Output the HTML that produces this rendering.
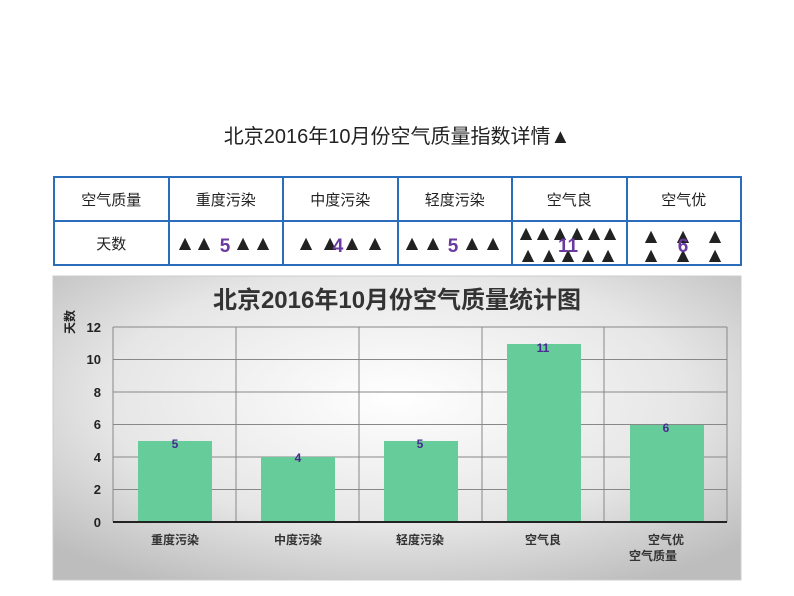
<!DOCTYPE html>
<html><head><meta charset="utf-8"><style>
body{margin:0;width:794px;height:596px;background:#fff;position:relative;overflow:hidden;font-family:"Liberation Sans","Noto Sans CJK SC",sans-serif;}
.t{position:absolute;left:0;width:794px;top:120px;text-align:center;font-size:20px;color:#222;}
table{position:absolute;left:53px;top:176px;border-collapse:collapse;table-layout:fixed;width:689px;}
td{border:2px solid #2a6ebb;text-align:center;font-size:15px;color:#222;padding:0;}
tr.a td{height:42px}tr.b td{height:42px}
</style></head><body>
<div class="t">北京2016年10月份空气质量指数详情▲</div>
<table>
<tr class="a"><td>空气质量</td><td>重度污染</td><td>中度污染</td><td>轻度污染</td><td>空气良</td><td>空气优</td></tr>
<tr class="b"><td>天数</td><td></td><td></td><td></td><td></td><td></td></tr>
</table>
<svg width="794" height="596" style="position:absolute;left:0;top:0">
<g fill="#222" font-size="16" font-family="DejaVu Sans,sans-serif" text-anchor="middle">
<text x="185" y="248">▲</text><text x="204" y="248">▲</text><text x="243" y="248">▲</text><text x="263" y="248">▲</text>
<text x="306" y="248">▲</text><text x="330" y="248">▲</text><text x="352" y="248">▲</text><text x="375" y="248">▲</text>
<text x="412" y="248">▲</text><text x="433" y="248">▲</text><text x="472" y="248">▲</text><text x="493" y="248">▲</text>
<text x="526" y="238">▲</text><text x="543" y="238">▲</text><text x="560" y="238">▲</text><text x="577" y="238">▲</text><text x="594" y="238">▲</text><text x="610" y="238">▲</text>
<text x="528" y="260">▲</text><text x="549" y="260">▲</text><text x="568" y="260">▲</text><text x="588" y="260">▲</text><text x="608" y="260">▲</text>
<text x="651" y="241">▲</text><text x="683" y="241">▲</text><text x="715" y="241">▲</text>
<text x="651" y="260">▲</text><text x="683" y="260">▲</text><text x="715" y="260">▲</text>
</g>
<g fill="#6a3aa0" font-size="19" font-weight="bold" font-family="Liberation Sans,sans-serif" text-anchor="middle">
<text x="225" y="252">5</text><text x="338" y="252">4</text><text x="453" y="252">5</text><text x="568" y="252">11</text><text x="683" y="252">6</text>
</g>
<defs><radialGradient id="bg" cx="50%" cy="40%" r="70%"><stop offset="0" stop-color="#ffffff"/><stop offset="0.6" stop-color="#e6e6e6"/><stop offset="1" stop-color="#bdbdbd"/></radialGradient></defs>
<rect x="53" y="276" width="688" height="304" fill="url(#bg)" stroke="#ccc"/>
<text x="397" y="308" text-anchor="middle" font-size="24" font-weight="bold" fill="#333" font-family="Liberation Sans,Noto Sans CJK SC,sans-serif">北京2016年10月份空气质量统计图</text>
<g stroke="#888" stroke-width="1">
<line x1="113" y1="327" x2="727" y2="327"/><line x1="113" y1="359.5" x2="727" y2="359.5"/><line x1="113" y1="392" x2="727" y2="392"/><line x1="113" y1="424.5" x2="727" y2="424.5"/><line x1="113" y1="457" x2="727" y2="457"/><line x1="113" y1="489.5" x2="727" y2="489.5"/>
<line x1="236" y1="327" x2="236" y2="522"/><line x1="359" y1="327" x2="359" y2="522"/><line x1="482" y1="327" x2="482" y2="522"/><line x1="604" y1="327" x2="604" y2="522"/><line x1="727" y1="327" x2="727" y2="522"/><line x1="113" y1="327" x2="113" y2="522"/>
</g>
<g fill="#66cc99">
<rect x="138" y="441" width="74" height="81"/><rect x="261" y="457" width="74" height="65"/><rect x="384" y="441" width="74" height="81"/><rect x="507" y="344" width="74" height="178"/><rect x="630" y="425" width="74" height="97"/>
</g>
<line x1="113" y1="522" x2="727" y2="522" stroke="#222" stroke-width="2"/>
<g fill="#4a2a90" font-size="12" font-weight="bold" text-anchor="middle" font-family="Liberation Sans,sans-serif">
<text x="175" y="448">5</text><text x="298" y="462">4</text><text x="420" y="448">5</text><text x="543" y="352">11</text><text x="666" y="432">6</text>
</g>
<g fill="#222" font-size="13" font-weight="bold" text-anchor="end" font-family="Liberation Sans,sans-serif">
<text x="101" y="332">12</text><text x="101" y="364">10</text><text x="101" y="397">8</text><text x="101" y="429">6</text><text x="101" y="462">4</text><text x="101" y="494">2</text><text x="101" y="527">0</text>
</g>
<g fill="#333" font-size="12" font-weight="bold" text-anchor="middle" font-family="Liberation Sans,Noto Sans CJK SC,sans-serif">
<text x="175" y="544">重度污染</text><text x="298" y="544">中度污染</text><text x="420" y="544">轻度污染</text><text x="543" y="544">空气良</text><text x="666" y="544">空气优</text><text x="653" y="560">空气质量</text>
</g>
<text transform="translate(74,334) rotate(-90)" fill="#222" font-size="12" font-weight="bold" font-family="Noto Sans CJK SC,sans-serif">天数</text>
</svg>
</body></html>
